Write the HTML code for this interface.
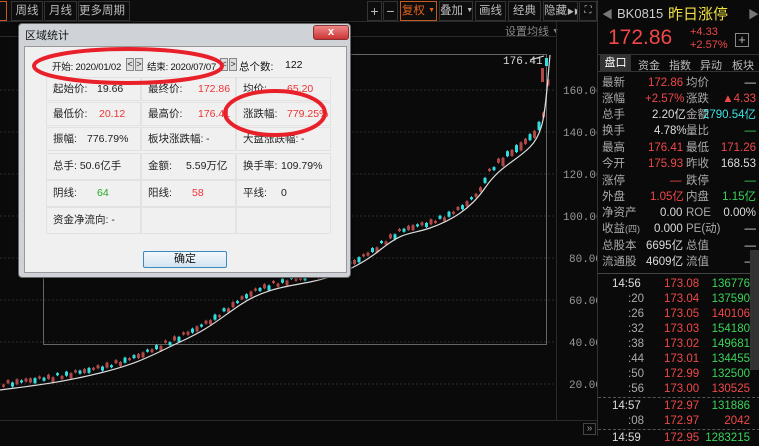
<!DOCTYPE html><html><head><meta charset="utf-8"><style>
*{margin:0;padding:0;box-sizing:border-box}
body{width:759px;height:436px;background:#0a0a0a;overflow:hidden;position:relative;font-family:"Liberation Sans","Noto Sans CJK SC",sans-serif;font-size:12px;color:#ccc}
.a{position:absolute;white-space:nowrap}
.tb{position:absolute;top:1px;height:20px;border:1px solid #333;color:#bbb;font-size:11.5px;line-height:18px;text-align:center;overflow:hidden;white-space:nowrap}
.t{font-size:7px;vertical-align:2px}
.dlg{position:absolute;left:18px;top:23px;width:333px;height:255px;background:#cfd3d8;border:1px solid #666;border-radius:4px;box-shadow:0 0 3px #000}
.in{position:absolute;left:5px;top:22px;width:323px;height:227px;background:#f0f0f0;border:1px solid #999}
.c{position:absolute;height:24px;border:1px solid #e2e2e2;background:#f0f0f0;font-size:10.5px;color:#222;line-height:22px;padding-left:6px;white-space:nowrap}
.c b{font-weight:normal;position:absolute}
.r{color:#e33}.g{color:#2a2}
.bt{position:absolute;top:11px;width:8px;height:13px;border:1px solid #888;background:#ddd;font-size:9px;line-height:11px;text-align:center;color:#222;overflow:visible}
.rp{position:absolute;left:597px;top:0;width:162px;height:436px;background:#0a0a0a;border-left:1px solid #333;font-size:12px}
.row{position:absolute;left:4px;width:154px;height:16px;line-height:16px;font-size:11.5px}
.row span{position:absolute;white-space:nowrap}
.gr{color:#aaa}.rd{color:#f04848}.gn{color:#3ad35a}.wh{color:#ddd}.cy{color:#3de3e3}
</style></head><body>
<div class="a" style="left:0;top:0;width:597px;height:22px;background:#0d0d0d;border-bottom:1px solid #2a2a2a"></div>
<div class="tb" style="left:-4px;width:11px;border-color:#c55a20"></div>
<div class="tb" style="left:11px;width:32px">周线</div>
<div class="tb" style="left:44px;width:33px">月线</div>
<div class="tb" style="left:78px;width:52px">更多周期 <span class="t">▼</span></div>
<div class="tb" style="left:367px;width:15px;font-size:14px">+</div>
<div class="tb" style="left:383px;width:15px;font-size:14px">−</div>
<div class="tb" style="left:400px;width:37px;border-color:#c55a20;color:#e06020">复权 <span class="t">▼</span></div>
<div class="tb" style="left:439px;width:34px">叠加 <span class="t">▼</span></div>
<div class="tb" style="left:475px;width:31px">画线</div>
<div class="tb" style="left:508px;width:33px">经典</div>
<div class="tb" style="left:543px;width:35px">隐藏<span style="font-size:7px">▶▶</span></div>
<div class="tb" style="left:579px;width:18px;font-size:10px">⛶</div>
<div class="a" style="left:505px;top:23px;color:#888;font-size:11px">设置均线 <span class="t">▼</span></div>
<div class="a" style="left:0;top:36px;width:556px;height:1px;background:#2a2a2a"></div>
<div class="a" style="left:556px;top:22px;width:1px;height:398px;background:#2a2a2a"></div>
<div class="a" style="left:0;top:420px;width:597px;height:1px;background:#2a2a2a"></div>
<div class="a" style="left:583px;top:423px;width:13px;height:12px;border:1px solid #444;color:#999;font-size:10px;line-height:10px;text-align:center">»</div>
<svg class="a" style="left:0;top:0" width="597" height="436">
<g stroke="#2a2a2a" stroke-dasharray="2,2">
<line x1="0" y1="90" x2="556" y2="90"/><line x1="0" y1="132" x2="556" y2="132"/><line x1="0" y1="174" x2="556" y2="174"/><line x1="0" y1="216" x2="556" y2="216"/><line x1="0" y1="258" x2="556" y2="258"/><line x1="0" y1="300" x2="556" y2="300"/><line x1="0" y1="342" x2="556" y2="342"/><line x1="0" y1="384" x2="556" y2="384"/></g>
<g fill="#999" font-size="11" font-family="Liberation Mono,monospace">
<text x="563" y="94">160.00</text><text x="563" y="136">140.00</text><text x="563" y="178">120.00</text><text x="563" y="220">100.00</text><text x="569" y="262">80.00</text><text x="569" y="304">60.00</text><text x="569" y="346">40.00</text><text x="569" y="388">20.00</text></g>
<rect x="43.5" y="54.5" width="503" height="290" fill="none" stroke="#666"/>
<text x="503" y="64" fill="#ddd" font-size="11" font-family="Liberation Mono,monospace">176.41</text>
<line x1="530" y1="60" x2="544" y2="56" stroke="#ddd"/>
<g id="cd"></g>
<path id="ma" fill="none" stroke="#ddd" stroke-width="1.2" d="M0,390 C30,386 60,383 100,373 S150,356 180,342 S215,322 240,305 S290,286 310,282 S355,270 380,250 S410,235 430,228 S470,210 485,188 S515,162 530,147 S545,110 550,55"/>
</svg>
<div class="dlg">
<div class="a" style="left:6px;top:3px;font-size:11px;color:#111">区域统计</div>
<div class="a" style="left:294px;top:1px;width:36px;height:15px;background:linear-gradient(#e88,#c33);border:1px solid #833;border-radius:3px;color:#fff;font-size:11px;text-align:center;line-height:13px;font-weight:bold">x</div>
<div class="in">
<div class="a" style="left:27px;top:12px;font-size:9.5px;color:#111;letter-spacing:-0.2px">开始: 2020/01/02</div>
<div class="bt" style="left:101px">&lt;</div><div class="bt" style="left:110px">&gt;</div>
<div class="a" style="left:122px;top:12px;font-size:9.5px;color:#111;letter-spacing:-0.2px">结束: 2020/07/07</div>
<div class="bt" style="left:195px">&lt;</div><div class="bt" style="left:204px">&gt;</div>
<div class="a" style="left:214px;top:12px;font-size:10.5px;color:#111">总个数:</div>
<div class="a" style="left:260px;top:12px;font-size:10.5px;color:#111">122</div>
<div class="c" style="left:21px;top:30px;width:95px">起始价:<b style="left:50px">19.66</b></div>
<div class="c" style="left:116px;top:30px;width:95px">最终价:<b class="r" style="left:56px">172.86</b></div>
<div class="c" style="left:211px;top:30px;width:95px">均价:<b class="r" style="left:50px">65.20</b></div>
<div class="c" style="left:21px;top:55px;width:95px">最低价:<b class="r" style="left:52px">20.12</b></div>
<div class="c" style="left:116px;top:55px;width:95px">最高价:<b class="r" style="left:56px">176.41</b></div>
<div class="c" style="left:211px;top:55px;width:95px">涨跌幅:<b class="r" style="left:50px">779.25%</b></div>
<div class="c" style="left:21px;top:80px;width:95px">振幅:<b style="left:40px">776.79%</b></div>
<div class="c" style="left:116px;top:80px;width:95px">板块涨跌幅:<b style="left:64px">-</b></div>
<div class="c" style="left:211px;top:80px;width:95px">大盘涨跌幅:<b style="left:64px">-</b></div>
<div class="c" style="left:21px;top:106px;width:95px;height:27px;line-height:25px">总手: 50.6亿手</div>
<div class="c" style="left:116px;top:106px;width:95px;height:27px;line-height:25px">金额:<b style="left:44px">5.59万亿</b></div>
<div class="c" style="left:211px;top:106px;width:95px;height:27px;line-height:25px">换手率:<b style="left:44px">109.79%</b></div>
<div class="c" style="left:21px;top:133px;width:95px;height:27px;line-height:25px">阴线:<b class="g" style="left:50px">64</b></div>
<div class="c" style="left:116px;top:133px;width:95px;height:27px;line-height:25px">阳线:<b class="r" style="left:50px">58</b></div>
<div class="c" style="left:211px;top:133px;width:95px;height:27px;line-height:25px">平线:<b style="left:44px">0</b></div>
<div class="c" style="left:21px;top:160px;width:95px;height:27px;line-height:25px">资金净流向: -</div>
<div class="c" style="left:116px;top:160px;width:95px;height:27px"></div>
<div class="c" style="left:211px;top:160px;width:95px;height:27px"></div>
<div class="a" style="left:118px;top:204px;width:84px;height:17px;border:1px solid #3a8ac0;border-radius:2px;background:linear-gradient(#f4f8fc,#d4e4f2);font-size:11px;text-align:center;line-height:15px;color:#111">确定</div>
</div></div>
<svg class="a" style="left:0;top:0" width="360" height="150">
<ellipse cx="128" cy="66" rx="94" ry="17" fill="none" stroke="#e8202a" stroke-width="4"/>
<ellipse cx="275" cy="113" rx="50" ry="22" fill="none" stroke="#e8202a" stroke-width="4"/>
</svg>
<div class="rp">
<div class="a" style="left:4px;top:6px;color:#777;font-size:11px">◀</div>
<div class="a" style="left:19px;top:6px;color:#ccc;font-size:13px">BK0815</div>
<div class="a" style="left:70px;top:3px;color:#f0e040;font-size:15px">昨日涨停</div>
<div class="a" style="left:150px;top:6px;color:#777;font-size:11px">▶</div>
<div class="a" style="left:10px;top:26px;color:#f04848;font-size:21px">172.86</div>
<div class="a" style="left:92px;top:26px;color:#f04848;font-size:11px">+4.33</div>
<div class="a" style="left:92px;top:39px;color:#f04848;font-size:11px">+2.57%</div>
<div class="a" style="left:137px;top:33px;width:14px;height:14px;border:1px solid #888;color:#bbb;font-size:13px;line-height:11px;text-align:center">+</div>
<div class="a" style="left:0;top:54px;width:162px;height:18px;border-top:1px solid #333;border-bottom:1px solid #333"></div>
<div class="a" style="left:2px;top:55px;width:31px;height:16px;background:#333;color:#fff;text-align:center;font-size:11px;line-height:16px">盘口</div>
<div class="a" style="left:40px;top:57px;color:#bbb;font-size:11px">资金</div>
<div class="a" style="left:71px;top:57px;color:#bbb;font-size:11px">指数</div>
<div class="a" style="left:102px;top:57px;color:#bbb;font-size:11px">异动</div>
<div class="a" style="left:134px;top:57px;color:#bbb;font-size:11px">板块</div>
<div class="row" style="top:75px"><span class="gr">最新</span><span class="rd" style="left:46px">172.86</span><span class="gr" style="left:84px">均价</span><span class="wh" style="right:0">—</span></div>
<div class="row" style="top:91px"><span class="gr">涨幅</span><span class="rd" style="left:43px">+2.57%</span><span class="gr" style="left:84px">涨跌</span><span class="rd" style="right:0">▲4.33</span></div>
<div class="row" style="top:107px"><span class="gr">总手</span><span class="wh" style="left:50px">2.20亿</span><span class="gr" style="left:84px">金额</span><span class="cy" style="right:0">2790.54亿</span></div>
<div class="row" style="top:123px"><span class="gr">换手</span><span class="wh" style="left:52px">4.78%</span><span class="gr" style="left:84px">量比</span><span class="gn" style="right:0">—</span></div>
<div class="row" style="top:140px"><span class="gr">最高</span><span class="rd" style="left:46px">176.41</span><span class="gr" style="left:84px">最低</span><span class="rd" style="right:0">171.26</span></div>
<div class="row" style="top:156px"><span class="gr">今开</span><span class="rd" style="left:46px">175.93</span><span class="gr" style="left:84px">昨收</span><span class="wh" style="right:0">168.53</span></div>
<div class="row" style="top:173px"><span class="gr">涨停</span><span class="rd" style="left:68px">—</span><span class="gr" style="left:84px">跌停</span><span class="gn" style="right:0">—</span></div>
<div class="row" style="top:189px"><span class="gr">外盘</span><span class="rd" style="left:48px">1.05亿</span><span class="gr" style="left:84px">内盘</span><span class="gn" style="right:0">1.15亿</span></div>
<div class="row" style="top:205px"><span class="gr">净资产</span><span class="wh" style="left:58px">0.00</span><span class="gr" style="left:84px">ROE</span><span class="wh" style="right:0">0.00%</span></div>
<div class="row" style="top:221px"><span class="gr">收益<span style="font-size:9px">(四)</span></span><span class="wh" style="left:52px">0.000</span><span class="gr" style="left:84px">PE(动)</span><span class="wh" style="right:0">—</span></div>
<div class="row" style="top:238px"><span class="gr">总股本</span><span class="wh" style="left:44px">6695亿</span><span class="gr" style="left:84px">总值</span><span class="wh" style="right:0">—</span></div>
<div class="row" style="top:254px"><span class="gr">流通股</span><span class="wh" style="left:44px">4609亿</span><span class="gr" style="left:84px">流值</span><span class="wh" style="right:0">—</span></div>
<div class="a" style="left:0;top:273px;width:162px;height:1px;background:#444"></div>
<div id="tk"></div>
</div>
<div class="a" style="left:750px;top:250px;width:9px;height:120px;background:#333"></div>
<script>
var tk=[["14:56","173.08","136776","gn",1],[":20","173.04","137590","gn"],[":26","173.05","140106","rd"],[":32","173.03","154180","gn"],[":38","173.02","149681","gn"],[":44","173.01","134455","gn"],[":50","172.99","132500","gn"],[":56","173.00","130525","rd"],["14:57","172.97","131886","gn",1],[":08","172.97","2042","rd"],["14:59","172.95","1283215","gn",1]];
var h="";tk.forEach(function(t,i){var y=276+i*15+(i>=8?2:0)+(i>=10?2:0);
h+='<div class="row" style="top:'+y+'px"><span class="'+(t[4]?'wh':'gr')+'" style="'+(t[4]?'left:10px':'left:26px')+'">'+t[0]+'</span><span class="rd" style="left:62px">'+t[1]+'</span><span class="'+t[3]+'" style="right:6px">'+t[2]+'</span></div>';
if(i==7||i==9)h+='<div class="a" style="left:0;top:'+(y+16)+'px;width:162px;border-top:1px dashed #555"></div>';});
document.getElementById('tk').innerHTML=h;
var p=document.getElementById('ma'),L=p.getTotalLength(),g="",n=122;
for(var i=0;i<n;i++){var x=2+i*4.5;if(x>548)break;
var lo=0,hi=L;for(var k=0;k<30;k++){var m=(lo+hi)/2;if(p.getPointAtLength(m).x<x)lo=m;else hi=m;}
var y=p.getPointAtLength(lo).y-5-Math.abs(Math.sin(i*1.7))*4-(x>480?6:0);
var red=((i*7)%5)<2.5,bh=2+((i*13)%4);if(x>500)bh+=3;
g+='<line x1="'+(x+1.5)+'" y1="'+(y-1)+'" x2="'+(x+1.5)+'" y2="'+(y+bh+1)+'" stroke="'+(red?'#c05050':'#30e0e0')+'"/>';
g+='<rect x="'+x+'" y="'+y+'" width="3" height="'+bh+'" fill="'+(red?'#b04848':'#30e0e0')+'"/>';}
g+='<rect x="541" y="68" width="3" height="14" fill="#b04848"/><rect x="545" y="58" width="3" height="8" fill="#30e0e0"/>';
document.getElementById('cd').innerHTML=g;
</script>
</body></html>
